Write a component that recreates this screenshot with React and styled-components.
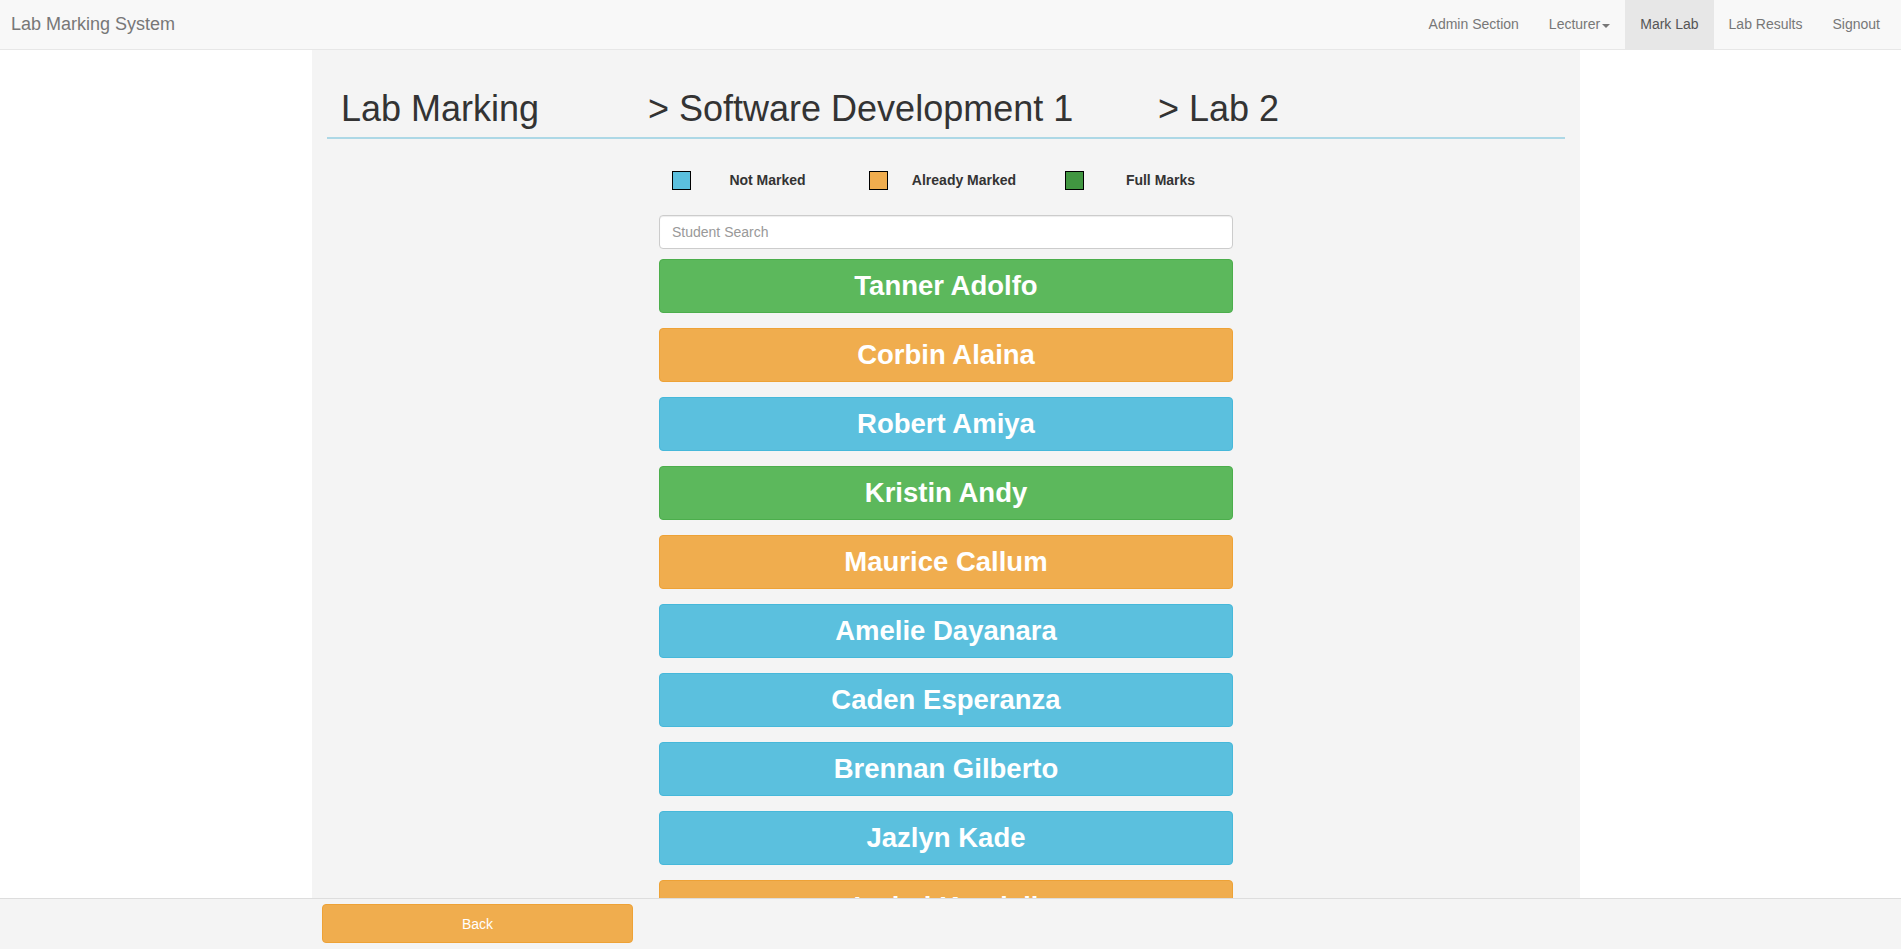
import React from 'react';
import styled, { createGlobalStyle } from 'styled-components';

const GlobalStyle = createGlobalStyle`
html {
  overflow-y: scroll;
}
html::-webkit-scrollbar {
  width: 3px;
}
html::-webkit-scrollbar-track {
  background: #f1f1f1;
}
html::-webkit-scrollbar-thumb {
  background: #c1c1c1;
}
* {
  box-sizing: border-box;
}
body {
  margin: 0;
  background: #fff;
  font-family: "Liberation Sans", Arial, sans-serif;
  font-size: 14px;
  line-height: 1.42857;
  color: #333;
}
`;

const COLORS = {
  full: { bg: '#5cb85c', border: '#4cae4c', swatch: '#419641' },
  marked: { bg: '#f0ad4e', border: '#eea236', swatch: '#f0ad4e' },
  none: { bg: '#5bc0de', border: '#46b8da', swatch: '#5bc0de' },
};

const students = [
  { name: 'Tanner Adolfo', status: 'full' },
  { name: 'Corbin Alaina', status: 'marked' },
  { name: 'Robert Amiya', status: 'none' },
  { name: 'Kristin Andy', status: 'full' },
  { name: 'Maurice Callum', status: 'marked' },
  { name: 'Amelie Dayanara', status: 'none' },
  { name: 'Caden Esperanza', status: 'none' },
  { name: 'Brennan Gilberto', status: 'none' },
  { name: 'Jazlyn Kade', status: 'none' },
  { name: 'Isabel Kendall', status: 'marked' },
  { name: 'Damian Lorenzo', status: 'none' },
  { name: 'Hailey Marcus', status: 'full' },
  { name: 'Owen Nathaniel', status: 'none' },
  { name: 'Sadie Pearson', status: 'marked' },
  { name: 'Elliot Quinn', status: 'none' },
  { name: 'Mariah Russell', status: 'none' },
  { name: 'Tristan Simone', status: 'full' },
  { name: 'Lila Turner', status: 'none' },
];

const Navbar = styled.nav`
  position: fixed;
  top: 0;
  left: 0;
  right: 0;
  z-index: 10;
  height: 50px;
  display: flex;
  justify-content: space-between;
  background: #f8f8f8;
  border-bottom: 1px solid #e7e7e7;
`;

const Brand = styled.a`
  display: flex;
  align-items: center;
  padding: 0 11px;
  font-size: 18px;
  color: #777;
  text-decoration: none;
`;

const NavList = styled.ul`
  display: flex;
  margin: 0 6px 0 0;
  padding: 0;
  list-style: none;
`;

const NavLink = styled.a`
  display: flex;
  align-items: center;
  height: 49px;
  padding: 0 15px;
  color: ${(p) => (p.$active ? '#555' : '#777')};
  background: ${(p) => (p.$active ? '#e7e7e7' : 'transparent')};
  text-decoration: none;
`;

const Caret = styled.span`
  display: inline-block;
  width: 0;
  height: 0;
  margin-left: 2px;
  margin-top: 2px;
  border-top: 4px solid #777;
  border-left: 4px solid transparent;
  border-right: 4px solid transparent;
`;

const Page = styled.main`
  padding-top: 50px;
`;

const Panel = styled.section`
  width: 1268px;
  margin-left: 312px;
  min-height: calc(100vh - 50px);
  padding: 39px 15px 70px;
  background: #f4f4f4;
`;

const Header = styled.h1`
  display: flex;
  margin: 0;
  padding: 0 0 9px;
  border-bottom: 2px solid #add8e6;
  font-size: 36px;
  font-weight: normal;
  line-height: 39px;
  color: #333;
`;

const Crumb = styled.span`
  flex: none;
  width: ${(p) => p.$w || 'auto'};
  padding-left: ${(p) => p.$pad || 0};
`;

const Column = styled.div`
  width: 574px;
  margin: 0 auto;
`;

const Legend = styled.div`
  display: grid;
  grid-template-columns: repeat(3, 196.5px);
  margin: 32px 0 0 13px;
  height: 19px;
`;

const LegendItem = styled.div`
  display: flex;
  align-items: center;
`;

const Swatch = styled.span`
  width: 19px;
  height: 19px;
  border: 1px solid #000;
  background: ${(p) => p.$color};
`;

const LegendLabel = styled.span`
  width: 153px;
  text-align: center;
  font-weight: bold;
  font-size: 14px;
  color: #333;
`;

const Search = styled.input`
  display: block;
  width: 100%;
  height: 34px;
  margin-top: 25px;
  padding: 6px 12px;
  border: 1px solid #ccc;
  border-radius: 4px;
  box-shadow: inset 0 1px 1px rgba(0, 0, 0, 0.075);
  font-family: inherit;
  font-size: 14px;
  color: #555;
  background: #fff;
  &::placeholder {
    color: #999;
  }
`;

const List = styled.div`
  display: flex;
  flex-direction: column;
  gap: 15px;
  margin-top: 10px;
`;

const StudentButton = styled.button`
  width: 100%;
  height: 54px;
  padding: 0 16px;
  border: 1px solid ${(p) => COLORS[p.$status].border};
  border-radius: 4px;
  background: ${(p) => COLORS[p.$status].bg};
  color: #fff;
  font-family: "Liberation Sans", Arial, sans-serif;
  font-weight: bold;
  font-size: 27.5px;
  cursor: pointer;
`;

const Footer = styled.footer`
  position: fixed;
  left: 0;
  right: 0;
  bottom: 0;
  z-index: 10;
  height: 51px;
  padding: 5px 0 0 322px;
  background: #f4f4f4;
  border-top: 1px solid #ddd;
`;

const BackButton = styled.button`
  width: 311px;
  height: 39px;
  border: 1px solid #eea236;
  border-radius: 4px;
  background: #f0ad4e;
  color: #fff;
  font-family: "Liberation Sans", Arial, sans-serif;
  font-size: 14px;
`;

const App = () => {
  return (
    <>
      <GlobalStyle />
      <Navbar>
        <Brand href="#">Lab Marking System</Brand>
        <NavList>
          <li><NavLink href="#">Admin Section</NavLink></li>
          <li><NavLink href="#">Lecturer<Caret /></NavLink></li>
          <li><NavLink href="#" $active>Mark Lab</NavLink></li>
          <li><NavLink href="#">Lab Results</NavLink></li>
          <li><NavLink href="#">Signout</NavLink></li>
        </NavList>
      </Navbar>
      <Page>
        <Panel>
          <Header>
            <Crumb $w="321px" $pad="14px">Lab Marking</Crumb>
            <Crumb $w="510px">&gt; Software Development 1</Crumb>
            <Crumb>&gt; Lab 2</Crumb>
          </Header>
          <Column>
            <Legend>
              <LegendItem>
                <Swatch $color={COLORS.none.swatch} />
                <LegendLabel>Not Marked</LegendLabel>
              </LegendItem>
              <LegendItem>
                <Swatch $color={COLORS.marked.swatch} />
                <LegendLabel>Already Marked</LegendLabel>
              </LegendItem>
              <LegendItem>
                <Swatch $color={COLORS.full.swatch} />
                <LegendLabel>Full Marks</LegendLabel>
              </LegendItem>
            </Legend>
            <Search type="text" placeholder="Student Search" />
            <List>
              {students.map((s) => (
                <StudentButton key={s.name} $status={s.status}>
                  {s.name}
                </StudentButton>
              ))}
            </List>
          </Column>
        </Panel>
      </Page>
      <Footer>
        <BackButton>Back</BackButton>
      </Footer>
    </>
  );
};

export default App;
